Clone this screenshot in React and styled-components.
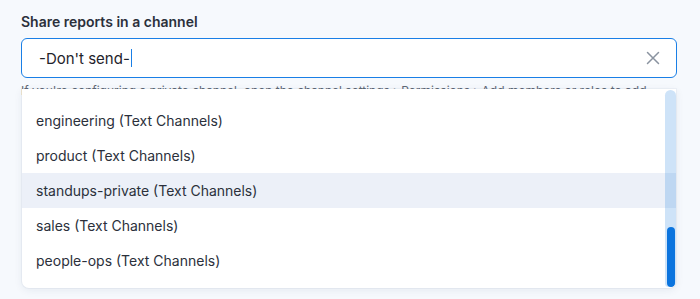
import React from "react";
import styled, { createGlobalStyle } from "styled-components";

const GlobalStyle = createGlobalStyle`
  html, body {
    margin: 0;
    padding: 0;
    background: #f6f9fd;
    font-family: Inter, "Noto Sans", sans-serif;
  }
`;

const Page = styled.div`
  width: 700px;
  height: 299px;
  padding: 13px 23px 0 21px;
  box-sizing: border-box;
  overflow: hidden;
`;

const Label = styled.div`
  font-size: 14px;
  font-weight: 600;
  color: #2b303b;
  line-height: 17px;
  margin-bottom: 8px;
`;

const Field = styled.div`
  position: relative;
`;

const InputBox = styled.div`
  height: 40px;
  box-sizing: border-box;
  border: 1px solid #1a7fe6;
  border-radius: 6px;
  background: #fff;
  display: flex;
  align-items: center;
  padding: 0 16px 0 17px;
`;

const Value = styled.span`
  flex: 1;
  font-size: 15px;
  color: #1f232b;
  display: flex;
  align-items: center;
`;

const Caret = styled.span`
  display: inline-block;
  width: 1px;
  height: 18px;
  background: #1a7fe6;
  margin-left: 1px;
`;

const Clear = styled.button`
  border: none;
  background: none;
  padding: 0;
  display: flex;
  cursor: pointer;
`;

const Help = styled.div`
  font-size: 12px;
  color: #5f6876;
  margin-top: 6px;
  white-space: nowrap;
  line-height: 14px;
`;

const Menu = styled.div`
  position: absolute;
  left: 1px;
  right: 1px;
  top: 51px;
  height: 199px;
  background: #fff;
  border-radius: 0 0 7px 7px;
  box-shadow: 0 2px 8px rgba(30, 50, 90, 0.08), 0 0 0 1px rgba(30, 50, 90, 0.04);
  overflow: hidden;
  padding-top: 14px;
  box-sizing: border-box;
`;

const Option = styled.div`
  height: 35px;
  display: flex;
  align-items: center;
  padding-left: 14px;
  font-size: 14px;
  color: #2b303b;
  background: ${(p) => (p.$active ? "#ecf0f8" : "transparent")};
`;

const Track = styled.div`
  position: absolute;
  right: 0;
  top: 1px;
  bottom: 1px;
  width: 11px;
  border-radius: 6px 6px 4px 4px;
  background: rgba(11, 116, 222, 0.2);
`;

const Thumb = styled.div`
  position: absolute;
  right: 1px;
  bottom: 0;
  width: 8px;
  height: 60px;
  border-radius: 4px;
  background: #0b74de;
`;

const channels = [
  "engineering (Text Channels)",
  "product (Text Channels)",
  "standups-private (Text Channels)",
  "sales (Text Channels)",
  "people-ops (Text Channels)",
];

export default function App() {
  return (
    <Page>
      <GlobalStyle />
      <Label>Share reports in a channel</Label>
      <Field>
        <InputBox>
          <Value>
            -Don't send-
            <Caret />
          </Value>
          <Clear aria-label="Clear">
            <svg width="14" height="14" viewBox="0 0 14 14">
              <path
                d="M1.5 1.5 L12.5 12.5 M12.5 1.5 L1.5 12.5"
                stroke="#8a93a0"
                strokeWidth="1.5"
                strokeLinecap="round"
              />
            </svg>
          </Clear>
        </InputBox>
        <Help>
          If you're configuring a private channel, open the channel settings › Permissions › Add members or roles to add
        </Help>
        <Menu>
          {channels.map((c, i) => (
            <Option key={c} $active={i === 2}>
              {c}
            </Option>
          ))}
          <Track>
            <Thumb />
          </Track>
        </Menu>
      </Field>
    </Page>
  );
}
